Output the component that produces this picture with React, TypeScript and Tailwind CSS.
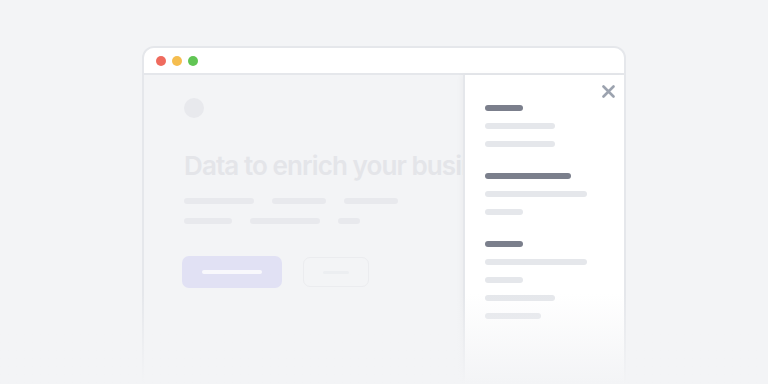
import React from "react";

const font = { fontFamily: "Inter, 'Noto Sans', sans-serif" };

function Bar({ w, dark }: { w: string; dark?: boolean }) {
  return <div className={`h-[6px] rounded-full ${w} ${dark ? "bg-[#7b7f8c]" : "bg-[#e5e7eb]"}`} />;
}

export default function App() {
  return (
    <div className="relative w-[768px] h-[384px] overflow-hidden bg-[#f3f4f6]" style={font}>
      <div className="pt-[46px] pl-[142px]">
        {/* browser window */}
        <div className="w-[484px] h-[360px] rounded-t-[12px] border-2 border-[#e5e7eb] bg-[#f3f4f6] overflow-hidden">
          <div className="h-[27px] bg-white border-b-2 border-[#e5e7eb] flex items-center gap-[6px] pl-[12px]">
            <span className="w-[10px] h-[10px] rounded-full bg-[#ef6b5e]" />
            <span className="w-[10px] h-[10px] rounded-full bg-[#f5bd4f]" />
            <span className="w-[10px] h-[10px] rounded-full bg-[#61c554]" />
          </div>

          <div className="relative h-full">
            {/* page behind the drawer */}
            <div className="pl-[40px] pt-[23px]">
              <div className="flex items-center justify-between">
                <div className="w-[20px] h-[20px] rounded-full bg-[#e8e9ed]" />
                <div className="h-[5px] w-[45px] rounded-full bg-[#eceef1] mr-[-20px]" />
              </div>
              <h1 className="mt-[32px] text-[26px] leading-[32px] font-semibold text-[#e4e5e9] whitespace-nowrap tracking-[-0.9px]">
                Data to enrich your business
              </h1>
              <div className="mt-[16px] flex gap-[18px]">
                <div className="h-[6px] w-[70px] rounded-full bg-[#e8e9ed]" />
                <div className="h-[6px] w-[54px] rounded-full bg-[#e8e9ed]" />
                <div className="h-[6px] w-[54px] rounded-full bg-[#e8e9ed]" />
              </div>
              <div className="mt-[14px] flex gap-[18px]">
                <div className="h-[6px] w-[48px] rounded-full bg-[#e8e9ed]" />
                <div className="h-[6px] w-[70px] rounded-full bg-[#e8e9ed]" />
                <div className="h-[6px] w-[22px] rounded-full bg-[#e8e9ed]" />
              </div>
              <div className="mt-[32px] ml-[-2px] flex items-center gap-[21px]">
                <div className="w-[100px] h-[32px] rounded-[7px] bg-[#e1e1f4] flex items-center justify-center">
                  <div className="h-[4px] w-[60px] rounded-full bg-[#f8f8fc]" />
                </div>
                <div className="w-[66px] h-[30px] rounded-[7px] border border-[#ebecef] flex items-center justify-center">
                  <div className="h-[3px] w-[26px] rounded-full bg-[#eceef1]" />
                </div>
              </div>
            </div>

            {/* drawer */}
            <div className="absolute top-0 right-0 bottom-0 w-[161px] bg-white border-l-2 border-[#e5e7eb] shadow-[-2px_0_6px_rgba(0,0,0,0.03)]">
              <button aria-label="close" className="absolute top-[10px] right-[9px] text-[#9ca3af]">
                <svg width="13" height="13" viewBox="0 0 13 13" fill="none" stroke="currentColor" strokeWidth="2.6" strokeLinecap="round">
                  <path d="M1.5 1.5l10 10M11.5 1.5l-10 10" />
                </svg>
              </button>
              <div className="pl-[20px] pt-[30px] flex flex-col">
                <div className="flex flex-col gap-[12px]">
                  <Bar w="w-[38px]" dark />
                  <Bar w="w-[70px]" />
                  <Bar w="w-[70px]" />
                </div>
                <div className="mt-[26px] flex flex-col gap-[12px]">
                  <Bar w="w-[86px]" dark />
                  <Bar w="w-[102px]" />
                  <Bar w="w-[38px]" />
                </div>
                <div className="mt-[26px] flex flex-col gap-[12px]">
                  <Bar w="w-[38px]" dark />
                  <Bar w="w-[102px]" />
                  <Bar w="w-[38px]" />
                  <Bar w="w-[70px]" />
                  <Bar w="w-[56px]" />
                </div>
              </div>
            </div>
          </div>
        </div>
      </div>
      {/* bottom fade */}
      <div className="absolute left-0 right-0 bottom-0 h-[90px] bg-gradient-to-b from-[#f3f4f6]/0 to-[#f3f4f6]" />
    </div>
  );
}
